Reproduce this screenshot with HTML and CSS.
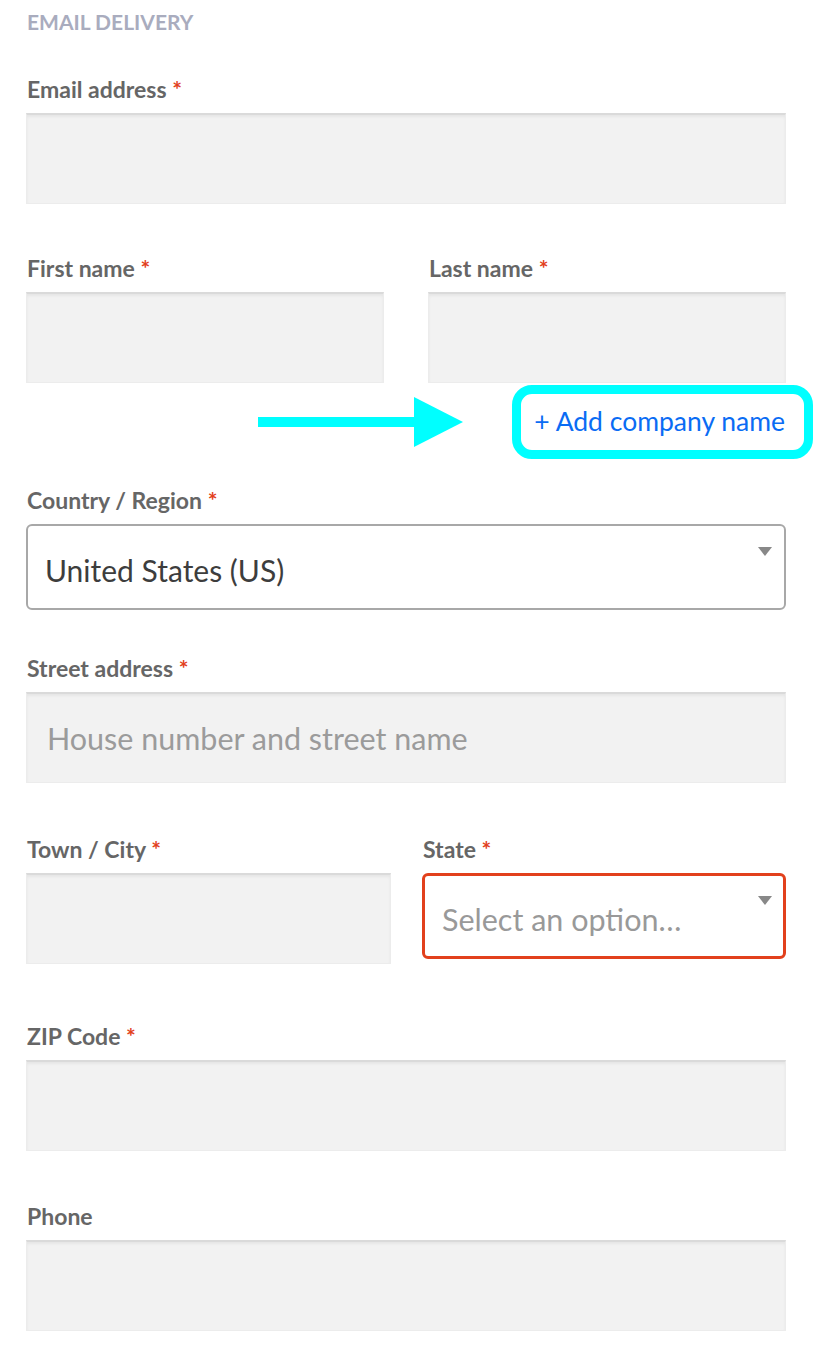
FILE: index.html
```html
<!DOCTYPE html>
<html lang="en">
<head>
<meta charset="utf-8">
<title>Email delivery</title>
<link rel="stylesheet" href="styles.css">
</head>
<body>
<form class="checkout">
  <h3 class="section-title">Email Delivery</h3>

  <div class="field field--email">
    <label class="label">Email address <span class="req">*</span></label>
    <input class="input" type="email">
  </div>

  <div class="row row--names">
    <div class="field">
      <label class="label">First name <span class="req">*</span></label>
      <input class="input" type="text">
    </div>
    <div class="field">
      <label class="label">Last name <span class="req">*</span></label>
      <input class="input" type="text">
    </div>
  </div>

  <div class="company-row">
    <svg class="pointer" width="206" height="50" viewBox="0 0 206 50" aria-hidden="true">
      <rect x="0" y="20" width="158" height="10" fill="#00ffff"/>
      <polygon points="156,0 205,25 156,50" fill="#00ffff"/>
    </svg>
    <a class="company-link" href="#">+ Add company name</a>
  </div>

  <div class="field field--country">
    <label class="label">Country / Region <span class="req">*</span></label>
    <div class="select">
      <span class="select-value">United States (US)</span>
      <span class="caret"></span>
    </div>
  </div>

  <div class="field field--street">
    <label class="label">Street address <span class="req">*</span></label>
    <input class="input" type="text" placeholder="House number and street name">
  </div>

  <div class="row row--city">
    <div class="field">
      <label class="label">Town / City <span class="req">*</span></label>
      <input class="input" type="text">
    </div>
    <div class="field">
      <label class="label">State <span class="req">*</span></label>
      <div class="select select--error">
        <span class="select-value select-value--placeholder">Select an option…</span>
        <span class="caret"></span>
      </div>
    </div>
  </div>

  <div class="field field--zip">
    <label class="label">ZIP Code <span class="req">*</span></label>
    <input class="input" type="text">
  </div>

  <div class="field field--phone">
    <label class="label">Phone</label>
    <input class="input" type="tel">
  </div>
</form>
</body>
</html>
```

FILE: styles.css
```css
* {
  box-sizing: border-box;
}

html, body {
  margin: 0;
  padding: 0;
  background: #ffffff;
}

body {
  font-family: "Lato", "Open Sans", "Liberation Sans", sans-serif;
  color: #404040;
}

.checkout {
  width: 818px;
  padding: 9px 32px 0 26px;
  display: flex;
  flex-direction: column;
}

.section-title {
  margin: 0;
  font-size: 21px;
  line-height: 26px;
  font-weight: 700;
  text-transform: uppercase;
  color: #a9acbe;
  padding-left: 1px;
}

.field {
  display: flex;
  flex-direction: column;
}

.label {
  display: block;
  font-size: 23px;
  line-height: 26px;
  font-weight: 700;
  color: #666666;
  margin-bottom: 11px;
  padding-left: 1px;
}

.req {
  color: #e2401c;
}

.input {
  display: block;
  width: 100%;
  height: 91px;
  margin: 0;
  padding: 0 20px;
  background: #f2f2f2;
  border: 1px solid #ececec;
  border-top: 2px solid #dadada;
  border-radius: 0;
  box-shadow: inset 0 2px 3px rgba(0, 0, 0, 0.05);
  font-family: inherit;
  font-size: 30.5px;
  color: #404040;
  outline: none;
}

.input::placeholder {
  color: #9b9b9b;
  opacity: 1;
}

.field--email {
  margin-top: 41px;
}

.row {
  display: grid;
}

.row--names {
  grid-template-columns: 358px 358px;
  column-gap: 44px;
  margin-top: 51px;
}

.company-row {
  position: relative;
  display: flex;
  justify-content: flex-end;
  height: 74px;
  margin-top: 2px;
}

.pointer {
  position: absolute;
  left: 232px;
  top: 12px;
}

.company-link {
  position: relative;
  display: flex;
  align-items: center;
  height: 74px;
  padding-bottom: 2px;
  font-size: 26.5px;
  color: #0a6cf4;
  text-decoration: none;
  padding-right: 1px;
}

.company-link::before {
  content: "";
  position: absolute;
  top: 0;
  bottom: 0;
  left: -22px;
  right: -27px;
  border: 9px solid #00ffff;
  border-radius: 20px;
}

.field--country {
  margin-top: 28px;
}

.select {
  position: relative;
  display: flex;
  align-items: center;
  height: 86px;
  padding: 6px 40px 0 17px;
  border: 2px solid #a8a8a8;
  border-radius: 6px;
  background: #ffffff;
}

.select-value {
  font-size: 30px;
  color: #3d3d3d;
  white-space: nowrap;
}

.select-value--placeholder {
  color: #999999;
}

.caret {
  position: absolute;
  right: 12px;
  top: 21px;
  width: 0;
  height: 0;
  border-left: 7.5px solid transparent;
  border-right: 7.5px solid transparent;
  border-top: 9px solid #888888;
}

.select--error {
  border: 3px solid #e2401c;
  padding-left: 17px;
}

.select--error .select-value {
  font-size: 30.5px;
}

.select--error .caret {
  right: 11px;
  top: 20px;
}

.field--street {
  margin-top: 45px;
}

.row--city {
  grid-template-columns: 365px 364px;
  column-gap: 31px;
  margin-top: 53px;
  align-items: start;
}

.field--zip {
  margin-top: 59px;
}

.field--phone {
  margin-top: 52px;
}
```
